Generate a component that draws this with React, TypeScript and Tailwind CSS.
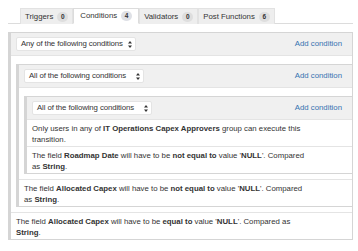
import React from 'react';

type Tab = { name: string; count: number; active?: boolean };

const tabs: Tab[] = [
  { name: 'Triggers', count: 0 },
  { name: 'Conditions', count: 4, active: true },
  { name: 'Validators', count: 0 },
  { name: 'Post Functions', count: 6 },
];

const Arrows: React.FC = () => (
  <svg width="4" height="7" viewBox="0 0 4 7" className="shrink-0">
    <path d="M2 0 L4 2.6 L0 2.6 Z M2 7 L4 4.4 L0 4.4 Z" fill="#333" />
  </svg>
);

const Select: React.FC<{ label: string }> = ({ label }) => (
  <div className="flex items-center justify-between w-[120px] h-[14px] pl-[4px] pr-[3px] bg-white border border-[#e4e4e4] rounded-[2px]">
    <span className="tracking-[-0.1px]">{label}</span>
    <Arrows />
  </div>
);

interface GroupProps {
  label: string;
  nested?: boolean;
  children: React.ReactNode;
}

const Group: React.FC<GroupProps> = ({ label, nested, children }) => (
  <div
    className={`border-t border-b border-l-[3px] border-[#d5d5d5] ${
      nested ? '' : 'border-r'
    }`}
  >
    <div className="flex items-center justify-between h-[22px] bg-[#f0f0f0] pl-[5px] pr-[10px]">
      <Select label={label} />
      <span className="text-[#3572b0]">Add condition</span>
    </div>
    {children}
  </div>
);

const Nested: React.FC<{ children: React.ReactNode }> = ({ children }) => (
  <div className="border-t border-[#e4e4e4] pl-[5px] pt-[8px] pb-[5px]">{children}</div>
);

const Row: React.FC<{ children: React.ReactNode }> = ({ children }) => (
  <div className="border-t border-[#e4e4e4] bg-white pl-[5px] pr-[6px] pt-[3px] pb-[1px] leading-[11px]">
    {children}
  </div>
);

export default function App() {
  return (
    <div className="w-[358px] h-[251px] bg-white pt-[8px] pl-[8px] pr-[5px] font-['Liberation_Sans',Arial,sans-serif] text-[7.8px] text-[#333] overflow-hidden">
      <div className="flex pl-[12px] border-b border-[#dcdcdc]">
        {tabs.map((t) => (
          <div
            key={t.name}
            className={`flex items-center gap-[4px] h-[16px] border-t border-l border-r -mb-px ${
              t.active
                ? 'bg-white border-[#dcdcdc] border-b border-b-white px-[6px]'
                : 'bg-[#eeeeee] border-[#e2e2e2] px-[4px]'
            }`}
          >
            <span>{t.name}</span>
            <span
              className={`flex items-center justify-center min-w-[11px] h-[10px] px-[2px] rounded-full text-[6.5px] font-bold ${
                t.active ? 'bg-[#dfe1e6]' : 'bg-[#dedede]'
              }`}
            >
              {t.count}
            </span>
          </div>
        ))}
      </div>

      <div className="mt-[8px]">
        <Group label="Any of the following conditions">
          <Nested>
            <Group label="All of the following conditions" nested>
              <Nested>
                <Group label="All of the following conditions" nested>
                  <Row>
                    Only users in any of <b>IT Operations Capex Approvers</b> group can execute this
                    <br />
                    transition.
                  </Row>
                  <Row>
                    The field <b>Roadmap Date</b> will have to be <b>not equal to</b> value '<b>NULL</b>'. Compared
                    <br />
                    as <b>String</b>.
                  </Row>
                </Group>
              </Nested>
              <Row>
                The field <b>Allocated Capex</b> will have to be <b>not equal to</b> value '<b>NULL</b>'. Compared
                <br />
                as <b>String</b>.
              </Row>
            </Group>
          </Nested>
          <Row>
            The field <b>Allocated Capex</b> will have to be <b>equal to</b> value '<b>NULL</b>'. Compared as
            <br />
            <b>String</b>.
          </Row>
        </Group>
      </div>
    </div>
  );
}
